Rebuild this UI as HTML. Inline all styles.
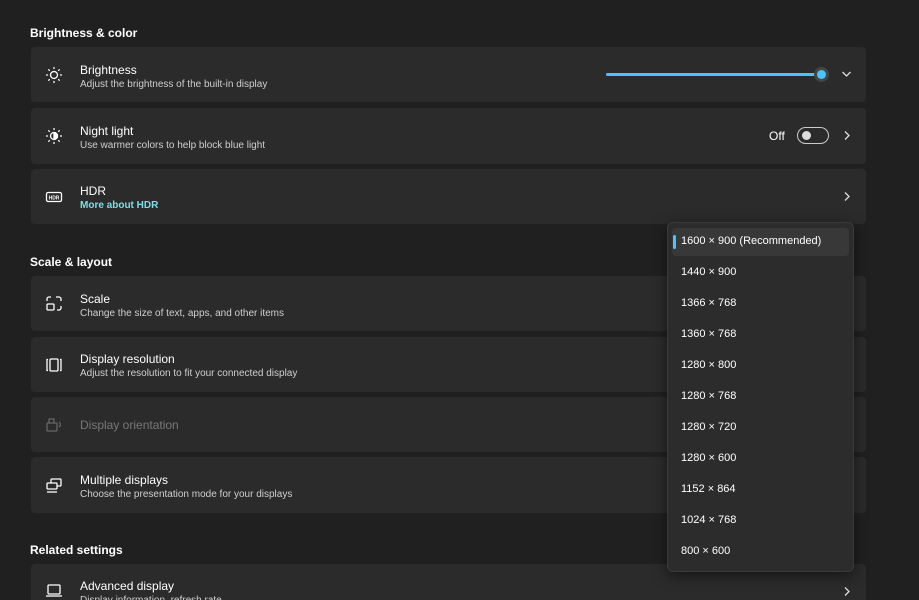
<!DOCTYPE html>
<html><head><style>
html,body{margin:0;width:919px;height:600px;overflow:hidden}
body{background:#202020;font-family:"Segoe UI","Liberation Sans",sans-serif;color:#fff;position:relative}
.h{position:absolute;left:30px;font-size:12px;font-weight:bold;color:#fff}
.c{position:absolute;left:31px;width:835px;background:#2b2b2b;border-radius:4px}
.t{position:absolute;left:49px;font-size:12px;color:#fff}
.s{position:absolute;left:49px;font-size:10px;color:#cfcfcf}
.ic{position:absolute;left:14px;width:18px;height:18px}
.dd{position:absolute;left:667px;top:222px;width:185px;height:348px;background:#2c2c2c;border:1px solid #3a3a3a;border-radius:6px;box-shadow:0 4px 14px rgba(0,0,0,.5)}
.it{position:absolute;left:13px;font-size:11px;color:#fff}
</style></head><body>
<div class="h" style="top:26px">Brightness &amp; color</div>
<div class="c" style="top:47px;height:55px">
<svg class="ic" style="top:19px" viewBox="0 0 18 18" fill="none" stroke="#fff" stroke-width="1.3"><circle cx="9" cy="9" r="3.5"/><g stroke-linecap="round"><path d="M9 1.5v1M9 15.5v1M1.5 9h1M15.5 9h1M3.7 3.7l.7.7M13.6 13.6l.7.7M3.7 14.3l.7-.7M13.6 4.4l.7-.7"/></g></svg>
<div class="t" style="top:16px">Brightness</div><div class="s" style="top:32px">Adjust the brightness of the built-in display</div>
<div style="position:absolute;left:575px;top:26px;width:215px;height:3px;background:#4cc2ff;border-radius:2px"></div>
<div style="position:absolute;left:783px;top:20px;width:15px;height:15px;border-radius:50%;background:#454545"><div style="margin:3px;width:9px;height:9px;border-radius:50%;background:#4cc2ff"></div></div>
<svg style="position:absolute;left:810px;top:23px" width="11" height="8" viewBox="0 0 11 8"><path d="M1.5 2l4 4 4-4" stroke="#ddd" stroke-width="1.3" fill="none"/></svg>
</div>
<div class="c" style="top:108px;height:56px">
<svg class="ic" style="top:19px" viewBox="0 0 18 18" fill="none" stroke="#fff" stroke-width="1.3"><circle cx="9" cy="9" r="3.5"/><path d="M9 5.5a3.5 3.5 0 0 1 0 7z" fill="#fff"/><g stroke-linecap="round"><path d="M9 1.5v1M9 15.5v1M1.5 9h1M15.5 9h1M3.7 3.7l.7.7M13.6 13.6l.7.7M3.7 14.3l.7-.7M13.6 4.4l.7-.7"/></g></svg>
<div class="t" style="top:16px">Night light</div><div class="s" style="top:32px">Use warmer colors to help block blue light</div>
<div style="position:absolute;left:738px;top:21px;font-size:12px">Off</div>
<div style="position:absolute;left:766px;top:19px;width:30px;height:15px;border:1px solid #ccc;border-radius:9px"><div style="margin:3px 4px;width:9px;height:9px;border-radius:50%;background:#ddd"></div></div>
<svg style="position:absolute;left:812px;top:22px" width="8" height="11" viewBox="0 0 8 11"><path d="M2 1.5l4 4-4 4" stroke="#ddd" stroke-width="1.3" fill="none"/></svg>
</div>
<div class="c" style="top:169px;height:55px">
<svg class="ic" style="top:19px" viewBox="0 0 18 18"><rect x="1.5" y="4.5" width="15" height="9" rx="1.5" fill="none" stroke="#fff" stroke-width="1.3"/><text x="9" y="11.5" font-size="5" font-family="Liberation Sans" font-weight="bold" fill="#fff" text-anchor="middle">HDR</text></svg>
<div class="t" style="top:15px">HDR</div><div class="s" style="top:31px;color:#7ddfe8;font-weight:bold">More about HDR</div>
<svg style="position:absolute;left:812px;top:22px" width="8" height="11" viewBox="0 0 8 11"><path d="M2 1.5l4 4-4 4" stroke="#ddd" stroke-width="1.3" fill="none"/></svg>
</div>
<div class="h" style="top:255px">Scale &amp; layout</div>
<div class="c" style="top:276px;height:55px">
<svg class="ic" style="top:19px" viewBox="0 0 18 18" fill="none" stroke="#fff" stroke-width="1.3"><rect x="2" y="9" width="7" height="6" rx="1"/><path d="M2 6V4a2 2 0 0 1 2-2h2M11 2h3a2 2 0 0 1 2 2v2M16 11v2a2 2 0 0 1-2 2h-2"/></svg>
<div class="t" style="top:16px">Scale</div><div class="s" style="top:32px">Change the size of text, apps, and other items</div></div>
<div class="c" style="top:337px;height:55px">
<svg class="ic" style="top:19px" viewBox="0 0 18 18" fill="none" stroke="#fff" stroke-width="1.3"><rect x="5" y="3" width="8" height="12" rx="1"/><path d="M3 3.5h-1v11h1M15 3.5h1v11h-1"/></svg>
<div class="t" style="top:15px">Display resolution</div><div class="s" style="top:31px">Adjust the resolution to fit your connected display</div></div>
<div class="c" style="top:397px;height:55px">
<svg class="ic" style="top:19px" viewBox="0 0 18 18" fill="none" stroke="#666" stroke-width="1.3"><rect x="2" y="7" width="10" height="8" rx="1"/><path d="M4 7V3h5v4M14 6a3 3 0 0 1 1 4l-1 1"/></svg>
<div class="t" style="top:21px;color:#777">Display orientation</div></div>
<div class="c" style="top:457px;height:56px">
<svg class="ic" style="top:19px" viewBox="0 0 18 18" fill="none" stroke="#fff" stroke-width="1.3"><rect x="6" y="3" width="10" height="7" rx="1"/><rect x="2" y="7" width="10" height="6" rx="1" fill="#2b2b2b"/><path d="M2 16h10"/></svg>
<div class="t" style="top:16px">Multiple displays</div><div class="s" style="top:32px">Choose the presentation mode for your displays</div></div>
<div class="h" style="top:543px">Related settings</div>
<div class="c" style="top:564px;height:36px;border-radius:4px 4px 0 0">
<svg class="ic" style="top:17px" viewBox="0 0 18 18" fill="none" stroke="#fff" stroke-width="1.3"><rect x="3" y="4" width="12" height="9" rx="1"/><path d="M1 15h16"/></svg>
<div class="t" style="top:15px">Advanced display</div><div class="s" style="top:31px">Display information, refresh rate</div>
<svg style="position:absolute;left:812px;top:22px" width="8" height="11" viewBox="0 0 8 11"><path d="M2 1.5l4 4-4 4" stroke="#ddd" stroke-width="1.3" fill="none"/></svg>
</div>
<div class="dd">
<div style="position:absolute;left:4px;top:5px;width:177px;height:28px;background:#383838;border-radius:4px"></div>
<div style="position:absolute;left:5px;top:12px;width:3px;height:14px;background:#4cc2ff;border-radius:2px"></div>
<div class="it" style="top:12px">1600 × 900 (Recommended)</div>
<div class="it" style="top:43px">1440 × 900</div>
<div class="it" style="top:74px">1366 × 768</div>
<div class="it" style="top:105px">1360 × 768</div>
<div class="it" style="top:136px">1280 × 800</div>
<div class="it" style="top:167px">1280 × 768</div>
<div class="it" style="top:198px">1280 × 720</div>
<div class="it" style="top:229px">1280 × 600</div>
<div class="it" style="top:260px">1152 × 864</div>
<div class="it" style="top:291px">1024 × 768</div>
<div class="it" style="top:322px">800 × 600</div>
</div>
</body></html>
